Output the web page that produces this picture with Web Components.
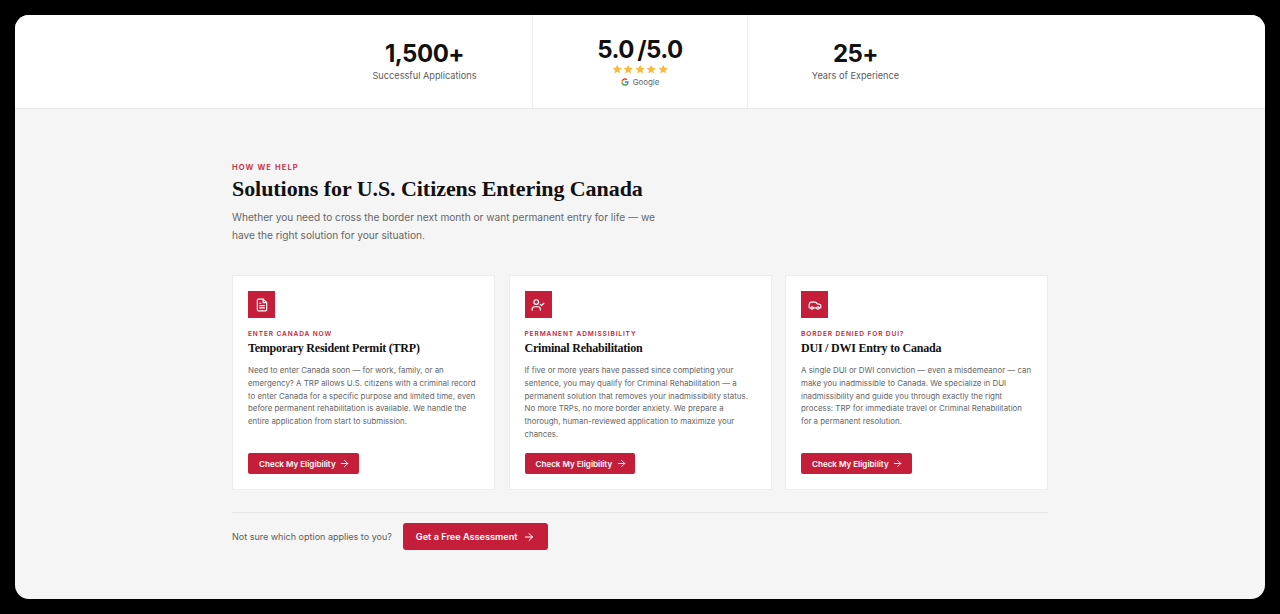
<!DOCTYPE html>
<html lang="en">
  <head>
    <meta charset="UTF-8" />
    <title>Solutions for U.S. Citizens Entering Canada</title>
    <style>
      html, body { margin: 0; height: 100%; background: #000; }
      body { padding: 15px; box-sizing: border-box; font-family: Inter, "Liberation Sans", sans-serif; }
    </style>
  </head>
  <body>
    <app-window>
      <stats-bar>
        <stat-cell value="1,500+" label="Successful Applications"></stat-cell>
        <rating-cell></rating-cell>
        <stat-cell value="25+" label="Years of Experience"></stat-cell>
      </stats-bar>
      <help-section>
        <solution-card icon="doc" eyebrow="ENTER CANADA NOW" title="Temporary Resident Permit (TRP)">Need to enter Canada soon — for work, family, or an emergency? A TRP allows U.S. citizens with a criminal record to enter Canada for a specific purpose and limited time, even before permanent rehabilitation is available. We handle the entire application from start to submission.</solution-card>
        <solution-card icon="user" eyebrow="PERMANENT ADMISSIBILITY" title="Criminal Rehabilitation">If five or more years have passed since completing your sentence, you may qualify for Criminal Rehabilitation — a permanent solution that removes your inadmissibility status. No more TRPs, no more border anxiety. We prepare a thorough, human-reviewed application to maximize your chances.</solution-card>
        <solution-card icon="car" eyebrow="BORDER DENIED FOR DUI?" title="DUI / DWI Entry to Canada">A single DUI or DWI conviction — even a misdemeanor — can make you inadmissible to Canada. We specialize in DUI inadmissibility and guide you through exactly the right process: TRP for immediate travel or Criminal Rehabilitation for a permanent resolution.</solution-card>
      </help-section>
    </app-window>

    <script>
      const ARROW = `<svg viewBox="0 0 24 24" fill="none" stroke="currentColor" stroke-width="2" stroke-linecap="round" stroke-linejoin="round"><path d="M5 12h14M12 5l7 7-7 7"/></svg>`;

      const ICONS = {
        doc: `<path d="M14 2H6a2 2 0 0 0-2 2v16a2 2 0 0 0 2 2h12a2 2 0 0 0 2-2V8z"/><path d="M14 2v6h6M16 13H8M16 17H8M10 9H8"/>`,
        user: `<path d="M16 21v-2a4 4 0 0 0-4-4H6a4 4 0 0 0-4 4v2"/><circle cx="9" cy="7" r="4"/><path d="M16 11l2 2 4-4"/>`,
        car: `<path d="M19 17h2c.6 0 1-.4 1-1v-3c0-.9-.7-1.7-1.5-1.9C18.7 10.6 16 10 16 10s-1.3-1.4-2.2-2.3c-.5-.4-1.1-.7-1.8-.7H5c-.6 0-1.1.4-1.4.9l-1.4 2.9A3.7 3.7 0 0 0 2 12v4c0 .6.4 1 1 1h2"/><circle cx="7" cy="17" r="2"/><path d="M9 17h6"/><circle cx="17" cy="17" r="2"/>`,
      };

      // Window frame with the rounded corners
      class AppWindow extends HTMLElement {
        constructor() {
          super();
          this.attachShadow({ mode: "open" });
          this.shadowRoot.innerHTML = `
            <style>
              :host { display: block; height: 584px; background: #f5f5f5; border-radius: 14px; overflow: hidden; }
            </style>
            <slot></slot>`;
        }
      }

      class StatsBar extends HTMLElement {
        constructor() {
          super();
          this.attachShadow({ mode: "open" });
          this.shadowRoot.innerHTML = `
            <style>
              :host { display: grid; grid-template-columns: 215px 216px 215px; padding-left: 302px; height: 94px; box-sizing: border-box; background: #fff; border-bottom: 1px solid #e8e8e8; }
            </style>
            <slot></slot>`;
        }
      }

      class StatCell extends HTMLElement {
        constructor() {
          super();
          this.attachShadow({ mode: "open" });
        }

        connectedCallback() {
          this.shadowRoot.innerHTML = `
            <style>
              :host { display: flex; flex-direction: column; align-items: center; justify-content: center; padding-bottom: 2px; }
              .value { font-size: 24px; line-height: 28px; font-weight: 700; letter-spacing: -.5px; color: #111; }
              .label { margin-top: 2px; font-size: 9.2px; line-height: 12px; color: #5c5c5c; }
            </style>
            <div class="value">${this.getAttribute("value")}</div>
            <div class="label">${this.getAttribute("label")}</div>`;
        }
      }

      class RatingCell extends HTMLElement {
        constructor() {
          super();
          this.attachShadow({ mode: "open" });
          const star = `<svg viewBox="0 0 24 24" width="10.4" height="10.4"><path fill="#f9b93c" d="M12 1.500l3.200 6.900 7.500.9-5.600 5.100 1.500 7.400L12 18.100l-6.600 3.700 1.500-7.400L1.300 9.300l7.500-.9z"/></svg>`;
          this.shadowRoot.innerHTML = `
            <style>
              :host { display: flex; flex-direction: column; align-items: center; padding-top: 21px; border-left: 1px solid #ececec; border-right: 1px solid #ececec; }
              .value { font-size: 24px; line-height: 28px; font-weight: 700; letter-spacing: -.5px; word-spacing: -2px; color: #111; }
              .stars { display: flex; gap: 1px; height: 11px; }
              .google { display: flex; align-items: center; gap: 4px; margin-top: .5px; font-size: 7.85px; line-height: 12px; color: #666; }
              .google svg { width: 8px; height: 8px; }
            </style>
            <div class="value">5.0 /5.0</div>
            <div class="stars">${star.repeat(5)}</div>
            <div class="google">
              <svg viewBox="0 0 24 24">
                <path fill="#4285f4" d="M23 12.300c0-.8-.1-1.600-.2-2.300H12v4.400h6.200a5.300 5.300 0 0 1-2.300 3.500v2.900h3.700c2.200-2 3.400-5 3.400-8.500z"/>
                <path fill="#34a853" d="M12 23.500c3.100 0 5.700-1 7.600-2.800l-3.700-2.900c-1 .7-2.300 1.100-3.900 1.100-3 0-5.500-2-6.400-4.700H1.800v3A11.500 11.500 0 0 0 12 23.500z"/>
                <path fill="#fbbc05" d="M5.600 14.200a6.900 6.900 0 0 1 0-4.400v-3H1.800a11.500 11.500 0 0 0 0 10.400z"/>
                <path fill="#ea4335" d="M12 5.100c1.700 0 3.200.6 4.400 1.700l3.300-3.300A11.500 11.500 0 0 0 1.800 6.800l3.800 3C6.500 7.100 9 5.100 12 5.100z"/>
              </svg>
              <span>Google</span>
            </div>`;
        }
      }

      class HelpSection extends HTMLElement {
        constructor() {
          super();
          this.attachShadow({ mode: "open" });
          this.shadowRoot.innerHTML = `
            <style>
              :host { display: block; width: 816px; margin: 0 auto; padding-top: 53px; }
              .eyebrow { font-size: 7.6px; line-height: 12px; font-weight: 600; letter-spacing: 1.1px; color: #c41e3a; }
              h2 { margin: 1px 0 0; font-family: "Liberation Serif", serif; font-size: 22px; line-height: 28px; font-weight: 700; color: #111; letter-spacing: -.06px; }
              p { margin: 5px 0 0; width: 430px; font-size: 10.15px; line-height: 18px; color: #666; }
              .cards { display: grid; grid-template-columns: repeat(3, 263px); gap: 13.5px; margin-top: 31px; }
              .more { display: flex; align-items: center; gap: 11px; margin-top: 22px; padding-top: 10px; border-top: 1px solid #e4e4e4; font-size: 9px; color: #5c5c5c; }
              a { display: flex; align-items: center; gap: 5px; height: 27px; padding: 0 13.5px 0 13px; background: #c41e3a; border-radius: 3px; color: #fff; font-size: 9.17px; font-weight: 600; }
              a svg { width: 12px; height: 12px; }
            </style>
            <div class="eyebrow">HOW WE HELP</div>
            <h2>Solutions for U.S. Citizens Entering Canada</h2>
            <p>Whether you need to cross the border next month or want permanent entry for life — we have the right solution for your situation.</p>
            <div class="cards"><slot></slot></div>
            <div class="more">
              <span>Not sure which option applies to you?</span>
              <a>Get a Free Assessment ${ARROW}</a>
            </div>`;
        }
      }

      class SolutionCard extends HTMLElement {
        constructor() {
          super();
          this.attachShadow({ mode: "open" });
        }

        connectedCallback() {
          this.shadowRoot.innerHTML = `
            <style>
              :host { display: flex; flex-direction: column; height: 215px; box-sizing: border-box; padding: 15px; background: #fff; border: 1px solid #ececec; }
              .icon { display: flex; align-items: center; justify-content: center; width: 27px; height: 27px; background: #c41e3a; color: #fff; }
              .icon svg { width: 14px; height: 14px; }
              .eyebrow { margin-top: 11px; font-size: 6.6px; line-height: 10px; font-weight: 600; letter-spacing: .86px; color: #c41e3a; }
              h3 { margin: 1px 0 0; font-family: "Liberation Serif", serif; font-size: 12px; line-height: 16px; font-weight: 700; color: #111; letter-spacing: -.22px; }
              .body { margin-top: 8px; font-size: 7.9px; line-height: 12.75px; color: #666; }
              a { display: inline-flex; align-items: center; align-self: flex-start; gap: 3.5px; height: 21px; margin-top: auto; padding: 0 8.5px 0 11px; background: #c41e3a; border-radius: 2px; color: #fff; font-size: 8.07px; font-weight: 600; }
              a svg { width: 11px; height: 11px; }
            </style>
            <div class="icon"><svg viewBox="0 0 24 24" fill="none" stroke="currentColor" stroke-width="2" stroke-linecap="round" stroke-linejoin="round">${ICONS[this.getAttribute("icon")]}</svg></div>
            <div class="eyebrow">${this.getAttribute("eyebrow")}</div>
            <h3>${this.getAttribute("title")}</h3>
            <div class="body"><slot></slot></div>
            <a>Check My Eligibility ${ARROW}</a>`;
        }
      }

      customElements.define("app-window", AppWindow);
      customElements.define("stats-bar", StatsBar);
      customElements.define("stat-cell", StatCell);
      customElements.define("rating-cell", RatingCell);
      customElements.define("help-section", HelpSection);
      customElements.define("solution-card", SolutionCard);
    </script>
  </body>
</html>
